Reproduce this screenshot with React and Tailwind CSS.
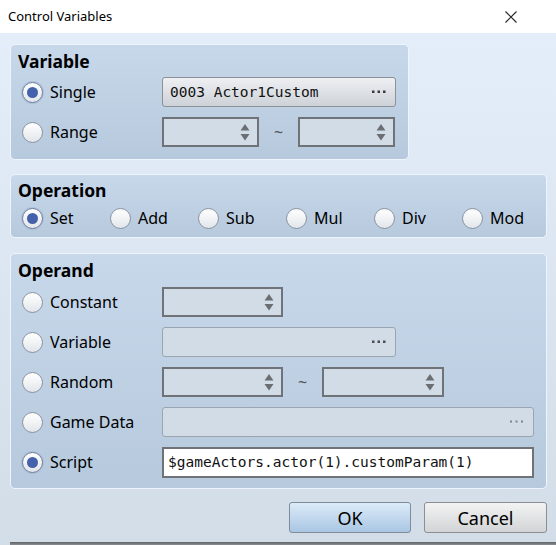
import React from 'react'

const ui = { fontFamily: '"Noto Sans", "Open Sans", sans-serif' }
const mono = { fontFamily: '"DejaVu Sans Mono", "Liberation Mono", monospace' }

function Radio({ checked, label, className = '' }) {
  return (
    <div className={`flex items-center ${className}`}>
      <span
        className={`flex h-[21px] w-[21px] shrink-0 items-center justify-center rounded-full border bg-gradient-to-b from-white to-[#e2e6ea] ${
          checked ? 'border-[#6d7f9c] shadow-[0_0_0_1px_#aebfd8]' : 'border-[#8a93a0]'
        }`}
      >
        {checked && <span className="h-[11px] w-[11px] rounded-full bg-[#4462ab]" />}
      </span>
      <span className="ml-[7px] text-[16px] leading-none text-black">{label}</span>
    </div>
  )
}

function Arrows() {
  return (
    <svg width="10" height="22" viewBox="0 0 10 22" className="shrink-0">
      <path d="M5 3 L9.5 9.5 L0.5 9.5 Z" fill="#6b6f74" />
      <path d="M0.5 13 L9.5 13 L5 19.5 Z" fill="#6b6f74" />
    </svg>
  )
}

function Spin({ width = 'w-[97px]' }) {
  return (
    <div className={`flex h-[30px] ${width} items-center justify-end border-2 border-[#6f7277] bg-[#d2dce7] pr-[7px]`}>
      <Arrows />
    </div>
  )
}

function Dots({ color = '#3a3a3a', size = 2.5 }) {
  return (
    <svg width="14" height="4" viewBox="0 0 14 4">
      <rect x="0" y="0.5" width={size} height={size} fill={color} />
      <rect x="5.5" y="0.5" width={size} height={size} fill={color} />
      <rect x="11" y="0.5" width={size} height={size} fill={color} />
    </svg>
  )
}

function Picker({ text, width, disabled, dots }) {
  return (
    <div
      className={`flex h-[30px] ${width} items-center justify-between rounded-[3px] border px-[7px] ${
        disabled
          ? 'border-[#9aa5b1] bg-[#d1dce7]'
          : 'border-[#8d9096] bg-gradient-to-b from-[#eef0f3] to-[#cdd2d8]'
      }`}
    >
      <span className="text-[14.5px] leading-none text-[#111]" style={mono}>
        {text}
      </span>
      <span className="pr-[2px]">{dots}</span>
    </div>
  )
}

function Group({ title, className = '', children }) {
  return (
    <div
      className={`rounded-[5px] border border-[#eef4fb] bg-gradient-to-b from-[#c7d8eb] to-[#b7c9dc] pl-[11px] ${className}`}
    >
      <div className="-ml-[4px] flex h-[21px] items-center text-[17.5px] font-bold leading-none text-black">{title}</div>
      {children}
    </div>
  )
}

function Row({ children, h = 'h-[40px]' }) {
  return <div className={`flex ${h} items-center`}>{children}</div>
}

function Tilde() {
  return <span className="w-[39px] text-center text-[16px] leading-none text-[#555]">~</span>
}

export default function App() {
  return (
    <div className="flex h-[545px] w-[556px] flex-col overflow-hidden bg-white" style={ui}>
      {/* title bar */}
      <div className="flex h-[33px] shrink-0 items-center justify-between bg-white pl-[8px] pr-[39px]">
        <span className="text-[13px] text-black">Control Variables</span>
        <svg width="12" height="12" viewBox="0 0 12 12">
          <path d="M0.5 0.5 L11.5 11.5 M11.5 0.5 L0.5 11.5" stroke="#222" strokeWidth="1.1" />
        </svg>
      </div>

      <div className="flex flex-1 flex-col bg-gradient-to-b from-[#e4eefa] to-[#d3dde8] pl-[10px]">
        <Group title="Variable" className="mt-[11px] w-[399px] pt-[6px] pb-[7px]">
          <Row>
            <Radio checked label="Single" className="w-[140px]" />
            <Picker text="0003 Actor1Custom" width="w-[234px]" dots={<Dots />} />
          </Row>
          <Row>
            <Radio label="Range" className="w-[140px]" />
            <Spin />
            <Tilde />
            <Spin />
          </Row>
        </Group>

        <Group title="Operation" className="mt-[14px] w-[537px] pt-[5px] pb-[2px]">
          <Row h="h-[34px]">
            <Radio checked label="Set" className="w-[88px]" />
            <Radio label="Add" className="w-[88px]" />
            <Radio label="Sub" className="w-[88px]" />
            <Radio label="Mul" className="w-[88px]" />
            <Radio label="Div" className="w-[88px]" />
            <Radio label="Mod" />
          </Row>
        </Group>

        <Group title="Operand" className="mt-[15px] w-[537px] pt-[6px] pb-[6px]">
          <div className="h-[1px]" />
          <Row>
            <Radio label="Constant" className="w-[140px]" />
            <Spin width="w-[121px]" />
          </Row>
          <Row>
            <Radio label="Variable" className="w-[140px]" />
            <Picker text="" width="w-[234px]" disabled dots={<Dots color="#4a4d52" />} />
          </Row>
          <Row>
            <Radio label="Random" className="w-[140px]" />
            <Spin width="w-[121px]" />
            <Tilde />
            <Spin width="w-[122px]" />
          </Row>
          <Row>
            <Radio label="Game Data" className="w-[140px]" />
            <Picker text="" width="w-[372px]" disabled dots={<Dots color="#7d838a" size={2} />} />
          </Row>
          <Row>
            <Radio checked label="Script" className="w-[140px]" />
            <div className="flex h-[31px] w-[372px] items-center border-2 border-[#6f7277] bg-white px-[4px]">
              <span className="text-[14.5px] leading-none text-[#111]" style={mono}>
                $gameActors.actor(1).customParam(1)
              </span>
            </div>
          </Row>
        </Group>

        <div className="mt-[13px] flex justify-end gap-[13px] pr-[9px]">
          <button className="h-[31px] w-[122px] rounded-[3px] border border-[#7f8c99] bg-gradient-to-b from-[#dcebf9] to-[#a9c6e3] text-[18px] leading-none text-black">
            OK
          </button>
          <button className="h-[31px] w-[123px] rounded-[3px] border border-[#8b8e92] bg-gradient-to-b from-[#f3f3f3] to-[#d2d4d6] text-[18px] leading-none text-black">
            Cancel
          </button>
        </div>

        <div className="mt-auto h-[3px] bg-gradient-to-b from-[#5f6266] to-[#8c8f93]" />
      </div>
    </div>
  )
}
